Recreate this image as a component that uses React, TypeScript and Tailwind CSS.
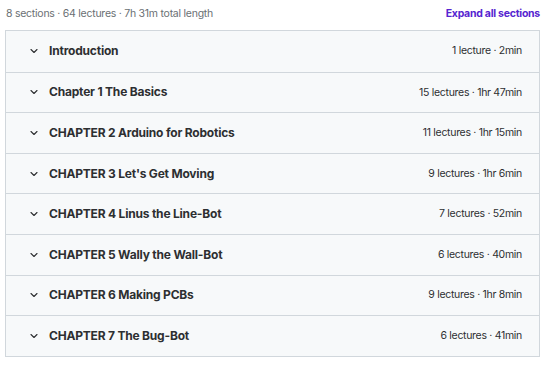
import { ChevronDown } from "lucide-react";

const sections = [
  { title: "Introduction", meta: "1 lecture · 2min" },
  { title: "Chapter 1 The Basics", meta: "15 lectures · 1hr 47min" },
  { title: "CHAPTER 2 Arduino for Robotics", meta: "11 lectures · 1hr 15min" },
  { title: "CHAPTER 3 Let's Get Moving", meta: "9 lectures · 1hr 6min" },
  { title: "CHAPTER 4 Linus the Line-Bot", meta: "7 lectures · 52min" },
  { title: "CHAPTER 5 Wally the Wall-Bot", meta: "6 lectures · 40min" },
  { title: "CHAPTER 6 Making PCBs", meta: "9 lectures · 1hr 8min" },
  { title: "CHAPTER 7 The Bug-Bot", meta: "6 lectures · 41min" },
];

export default function App() {
  return (
    <div className="w-[541px] h-[365px] bg-white text-[#2d2f31] font-['Inter',sans-serif]">
      {/* Summary bar */}
      <div className="flex items-center justify-between h-[30px] pl-[6px] pr-[1px] pb-[2px]">
        <span className="text-[10.5px] text-[#6a6f73] tracking-[-0.25px]">
          8 sections · 64 lectures · 7h 31m total length
        </span>
        <button className="text-[10.5px] font-bold text-[#5624d0] tracking-[-0.25px]">
          Expand all sections
        </button>
      </div>

      {/* Sections list */}
      <div className="ml-[5px] w-[535px] border border-[#d1d7dc]">
        {sections.map((s, i) => (
          <div
            key={s.title}
            className={
              "flex items-center h-[40.6px] bg-[#f7f9fa] pl-[22px] pr-[17px] " +
              (i > 0 ? "border-t border-[#d1d7dc]" : "")
            }
          >
            <ChevronDown className="w-[12px] h-[12px] text-[#2d2f31]" strokeWidth={2.2} />
            <span className="ml-[9px] flex-1 text-[12px] font-bold tracking-[-0.2px]">
              {s.title}
            </span>
            <span className="text-[10.5px] tracking-[-0.3px]">{s.meta}</span>
          </div>
        ))}
      </div>
    </div>
  );
}
